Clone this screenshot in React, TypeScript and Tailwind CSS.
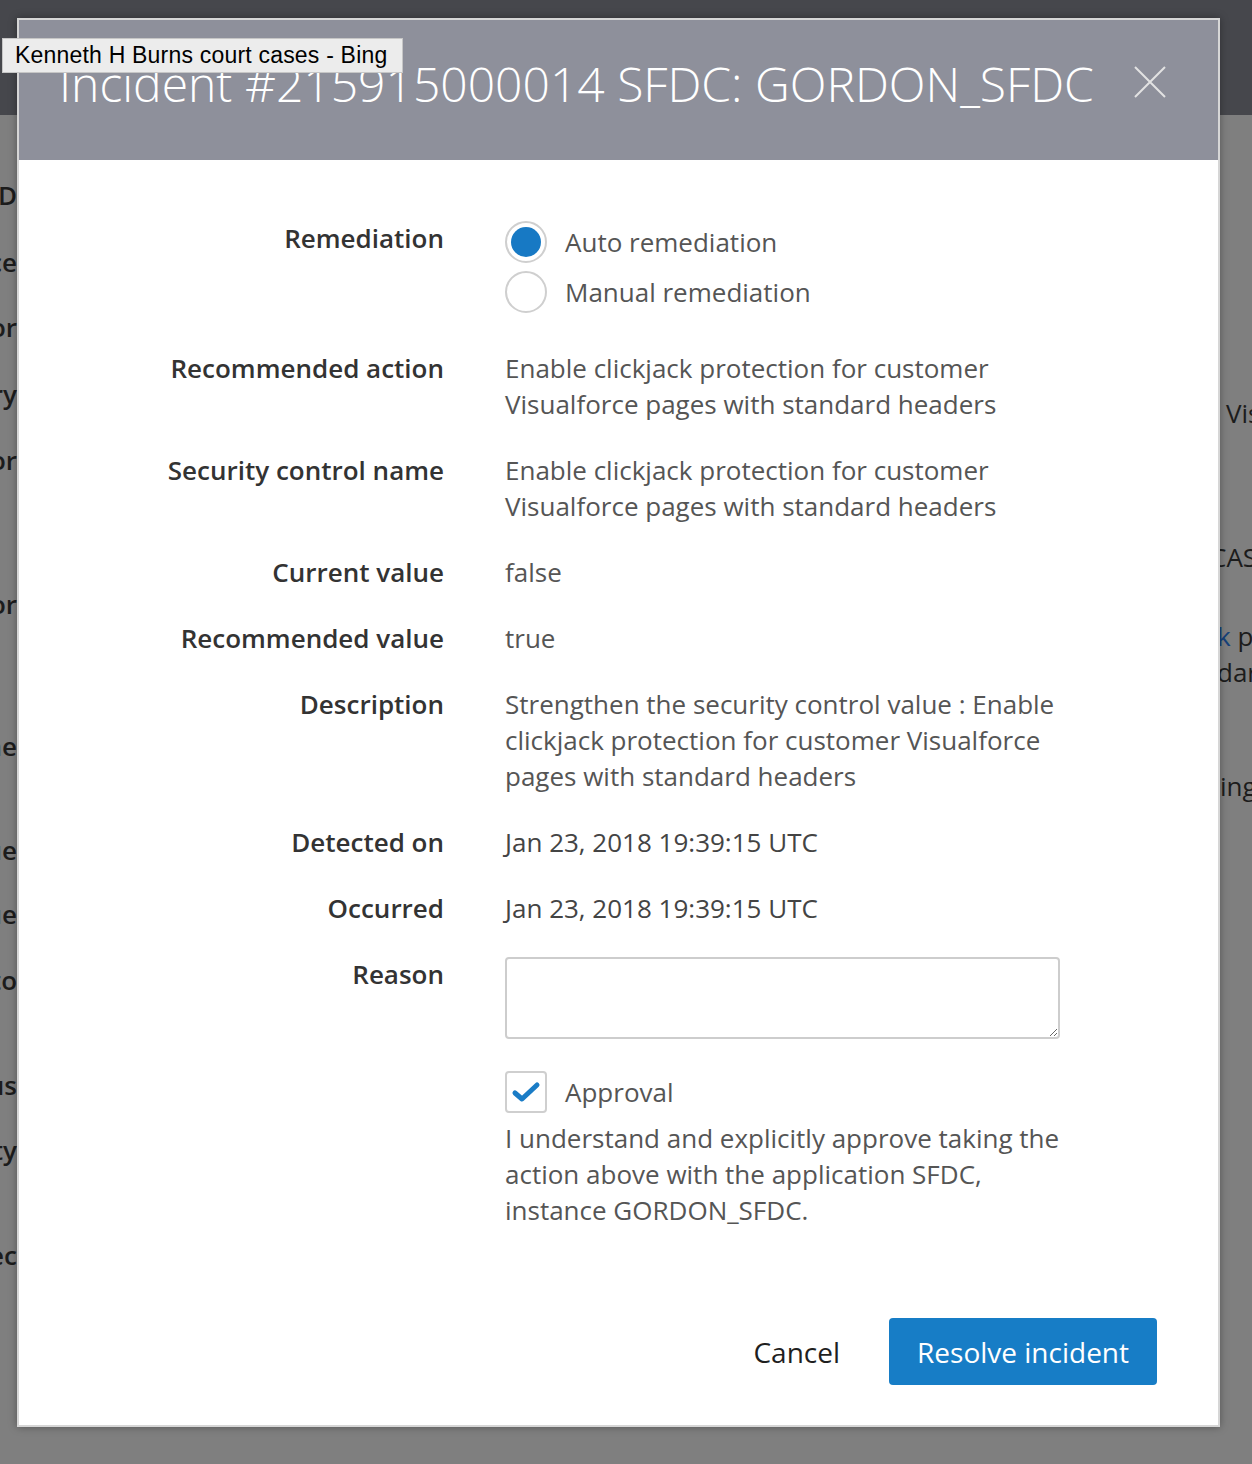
import React from 'react';

const FONT = { fontFamily: '"Open Sans", "Noto Sans", sans-serif' };

const Row: React.FC<{ label: string; className?: string; children: React.ReactNode }> = ({ label, className = '', children }) => (
  <div className={`flex ${className}`}>
    <div className="w-[425px] shrink-0 text-right font-semibold text-[26px] leading-[36px] text-[#333333]">{label}</div>
    <div className="ml-[61px] w-[555px] text-[26px] leading-[36px] text-[#555555]">{children}</div>
  </div>
);

const Radio: React.FC<{ checked?: boolean; label: string }> = ({ checked, label }) => (
  <label className="flex h-[50px] items-center">
    <span className="flex h-[42px] w-[42px] items-center justify-center rounded-full border-2 border-[#cfcfcf] bg-white">
      {checked && <span className="h-[30px] w-[30px] rounded-full bg-[#1779c4]"></span>}
    </span>
    <span className="ml-[18px]">{label}</span>
  </label>
);

export default function App() {
  return (
    <div className="relative h-[1464px] w-full overflow-hidden bg-[#7f7f7f]" style={FONT}>
      {/* page behind the overlay */}
      <div className="h-[115px] bg-[#46474c]"></div>
      <div className="flex justify-between text-[26px] leading-[36px] text-[#1c1c1c]">
        <div className="flex w-[17px] flex-col overflow-hidden font-semibold">
          <div className="mt-[62px] flex justify-end whitespace-nowrap">Policy ID</div>
          <div className="mt-[31px] flex justify-end whitespace-nowrap">Source</div>
          <div className="mt-[29px] flex justify-end whitespace-nowrap">Vendor</div>
          <div className="mt-[31px] flex justify-end whitespace-nowrap">Category</div>
          <div className="mt-[30px] flex justify-end whitespace-nowrap">Detector</div>
          <div className="mt-[108px] flex justify-end whitespace-nowrap">Author</div>
          <div className="mt-[106px] flex justify-end whitespace-nowrap">Baseline</div>
          <div className="mt-[68px] flex justify-end whitespace-nowrap">Current value</div>
          <div className="mt-[28px] flex justify-end whitespace-nowrap">Recommended value</div>
          <div className="mt-[30px] flex justify-end whitespace-nowrap">Auto</div>
          <div className="mt-[69px] flex justify-end whitespace-nowrap">Status</div>
          <div className="mt-[29px] flex justify-end whitespace-nowrap">Severity</div>
          <div className="mt-[69px] flex justify-end whitespace-nowrap">Spec</div>
        </div>
        <div className="flex w-[32px] flex-col overflow-hidden whitespace-nowrap">
          <div className="mt-[280px] pl-[6px]">Visualforce</div>
          <div className="ml-[-10px] mt-[108px]">CASB</div>
          <div className="ml-[-3px] mt-[43px]"><span className="text-[#17427a]">k</span> protection</div>
          <div className="ml-[-3px]">dard headers</div>
          <div className="mt-[78px]">ing</div>
        </div>
      </div>

      {/* modal */}
      <div className="absolute left-[17px] top-[18px] w-[1203px] border-2 border-[#d6d6d6] bg-white shadow-[0_0_8px_rgba(0,0,0,0.35)]">
        <div className="flex h-[140px] items-start justify-between bg-[#8e909b] pl-[40px] pr-[52px] pt-[40px]">
          <h2 className="whitespace-nowrap text-[48px] font-light leading-[48px] text-white">
            Incident #215915000014 SFDC: GORDON_SFDC
          </h2>
          <button className="mt-[6px] text-[#e2e2e2]" aria-label="Close">
            <svg width="32" height="32" viewBox="0 0 32 32" fill="none" stroke="currentColor" strokeWidth="2">
              <path d="M1 1L31 31M31 1L1 31" />
            </svg>
          </button>
        </div>

        <div className="pt-[57px]">
          <div className="flex">
            <div className="w-[425px] shrink-0 pt-[3px] text-right text-[26px] font-semibold leading-[36px] text-[#333333]">Remediation</div>
            <div className="ml-[61px] flex flex-col text-[26px] text-[#555555]">
              <Radio checked label="Auto remediation" />
              <Radio label="Manual remediation" />
            </div>
          </div>

          <Row label="Recommended action" className="mt-[33px]">
            Enable clickjack protection for customer Visualforce pages with standard headers
          </Row>
          <Row label="Security control name" className="mt-[30px]">
            Enable clickjack protection for customer Visualforce pages with standard headers
          </Row>
          <Row label="Current value" className="mt-[30px]">false</Row>
          <Row label="Recommended value" className="mt-[30px]">true</Row>
          <Row label="Description" className="mt-[30px]">
            Strengthen the security control value : Enable clickjack protection for customer Visualforce pages with standard headers
          </Row>
          <Row label="Detected on" className="mt-[30px]">
            <span className="text-[#444444]">Jan 23, 2018 19:39:15 UTC</span>
          </Row>
          <Row label="Occurred" className="mt-[30px]">
            <span className="text-[#444444]">Jan 23, 2018 19:39:15 UTC</span>
          </Row>
          <Row label="Reason" className="mt-[30px]">
            <textarea className="mt-[1px] block h-[82px] w-[555px] rounded-[4px] border-2 border-[#cdcdcd] px-3 py-2 outline-none"></textarea>
            <label className="mt-[32px] flex items-center">
              <span className="flex h-[42px] w-[42px] items-center justify-center rounded-[4px] border-2 border-[#cfcfcf]">
                <svg width="30" height="24" viewBox="0 0 30 24" fill="none" stroke="#1a7cc6" strokeWidth="5" strokeLinecap="round" strokeLinejoin="round">
                  <path d="M4 13L11 19L26 5" />
                </svg>
              </span>
              <span className="ml-[18px]">Approval</span>
            </label>
            <p className="mt-[7px]">
              I understand and explicitly approve taking the action above with the application SFDC, instance GORDON_SFDC.
            </p>
          </Row>

          <div className="mt-[90px] flex items-center justify-end pb-[40px] pr-[61px]">
            <button className="text-[28px] leading-[40px] text-[#1f1f1f]">Cancel</button>
            <button className="ml-[49px] h-[67px] rounded-[4px] bg-[#177dc6] px-[28px] text-[28px] text-white">
              Resolve incident
            </button>
          </div>
        </div>
      </div>

      {/* browser tooltip */}
      <div
        className="absolute left-[2px] top-[38px] h-[35px] w-[401px] border border-[#c6c6c6] bg-[#ececec] pl-[12px] text-[23px] leading-[33px] tracking-[0.2px] text-black"
        style={{ fontFamily: '"Liberation Sans", Arial, sans-serif' }}
      >
        Kenneth H Burns court cases - Bing
      </div>
    </div>
  );
}
